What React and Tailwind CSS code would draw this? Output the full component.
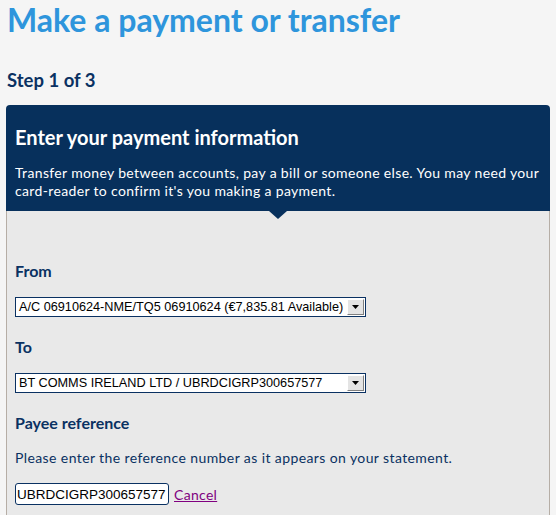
const Dropdown = ({ value }) => (
  <div className="flex items-stretch w-[351px] h-[20px] border border-[#0a3162] bg-white">
    <div className="flex-1 pl-[3px] text-[12.7px] leading-[18px] text-black whitespace-nowrap overflow-hidden [font-family:'Liberation_Sans',sans-serif]">
      {value}
    </div>
    <div className="w-[17px] m-[1px] bg-[#e4e4e4] border border-t-white border-l-white border-r-[#808080] border-b-[#808080] flex items-center justify-center">
      <svg width="7" height="4" viewBox="0 0 7 4">
        <path d="M0 0h7L3.5 4z" fill="#000" />
      </svg>
    </div>
  </div>
);

export default function App() {
  return (
    <div className="min-h-[515px] bg-[#f5f5f5] px-[6px] [font-family:Lato,sans-serif]">
      <h1 className="pl-px pt-[1px] text-[32px] leading-[38px] font-bold text-[#2e95dc]">
        Make a payment or transfer
      </h1>
      <h2 className="pl-px mt-[29px] text-[18.5px] leading-[24px] font-bold text-[#0a3162]">
        Step 1 of 3
      </h2>

      <div className="mt-[13px]">
        {/* Header */}
        <div className="relative bg-[#07305c] rounded-t-[4px] pl-[9px] pr-[3px] pt-[19px] pb-[11px]">
          <h3 className="text-[20px] leading-[26px] font-bold text-white">
            Enter your payment information
          </h3>
          <p className="mt-[14px] text-[14px] leading-[18px] tracking-[0.35px] text-white">
            Transfer money between accounts, pay a bill or someone else. You may need your card-reader to confirm it's you making a payment.
          </p>
          <div className="absolute left-[263px] -bottom-[8px] w-0 h-0 border-l-[9px] border-r-[9px] border-t-[8px] border-l-transparent border-r-transparent border-t-[#07305c]" />
        </div>

        {/* Body */}
        <div className="bg-[#e9e9e9] border-l border-r border-[#b6aea6] px-[8px] pt-[50px] pb-[12px]">
          <p className="text-[16px] leading-[20px] font-bold text-[#0a3162]">From</p>
          <div className="mt-[16px]">
            <Dropdown value="A/C 06910624-NME/TQ5 06910624 (€7,835.81 Available)" />
          </div>

          <p className="mt-[20px] text-[16px] leading-[20px] font-bold text-[#0a3162]">To</p>
          <div className="mt-[16px]">
            <Dropdown value="BT COMMS IRELAND LTD / UBRDCIGRP300657577" />
          </div>

          <p className="mt-[20px] text-[16px] leading-[20px] font-bold text-[#0a3162]">Payee reference</p>
          <p className="mt-[16px] text-[14px] leading-[18px] tracking-[0.4px] text-[#0a3162]">
            Please enter the reference number as it appears on your statement.
          </p>

          <div className="mt-[16px] flex items-center gap-[5px]">
            <input
              defaultValue="UBRDCIGRP300657577"
              className="w-[154px] h-[22px] px-[1px] bg-white border border-[#0a3162] rounded-[3px] text-[13.5px] text-black outline-none [font-family:'Liberation_Sans',sans-serif]"
            />
            <a href="#" className="text-[14px] tracking-[0.3px] text-[#800080] underline">Cancel</a>
          </div>
        </div>
      </div>
    </div>
  );
}
